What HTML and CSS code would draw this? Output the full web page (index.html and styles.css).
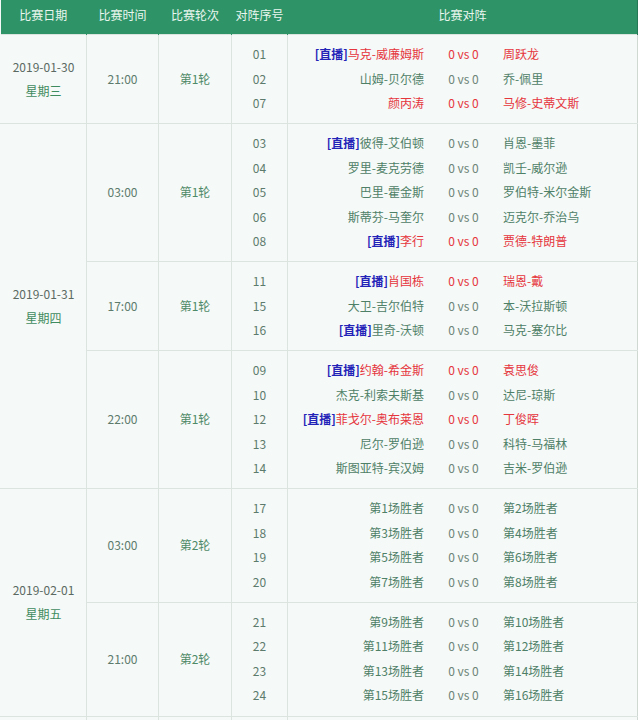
FILE: index.html
```html
<!DOCTYPE html>
<html lang="zh">
<head>
<meta charset="utf-8">
<title>赛程</title>
<link rel="stylesheet" href="styles.css">
</head>
<body>
<table class="sched">
  <colgroup>
    <col class="c-date"><col class="c-time"><col class="c-round"><col class="c-no"><col class="c-match">
  </colgroup>
  <thead>
    <tr><th>比赛日期</th><th>比赛时间</th><th>比赛轮次</th><th>对阵序号</th><th>比赛对阵</th></tr>
  </thead>
  <tbody>
    <tr>
      <td class="date"><div class="d">2019-01-30</div><div class="w">星期三</div></td>
      <td>21:00</td>
      <td class="rnd">第1轮</td>
      <td class="nos"><div>01</div><div>02</div><div>07</div></td>
      <td class="m">
        <div class="mr red"><span class="h"><b class="live">[直播]</b>马克-威廉姆斯</span><span class="s">0 vs 0</span><span class="a">周跃龙</span></div>
        <div class="mr"><span class="h">山姆-贝尔德</span><span class="s">0 vs 0</span><span class="a">乔-佩里</span></div>
        <div class="mr red"><span class="h">颜丙涛</span><span class="s">0 vs 0</span><span class="a">马修-史蒂文斯</span></div>
      </td>
    </tr>
    <tr>
      <td class="date" rowspan="3"><div class="d">2019-01-31</div><div class="w">星期四</div></td>
      <td>03:00</td>
      <td class="rnd">第1轮</td>
      <td class="nos"><div>03</div><div>04</div><div>05</div><div>06</div><div>08</div></td>
      <td class="m">
        <div class="mr"><span class="h"><b class="live">[直播]</b>彼得-艾伯顿</span><span class="s">0 vs 0</span><span class="a">肖恩-墨菲</span></div>
        <div class="mr"><span class="h">罗里-麦克劳德</span><span class="s">0 vs 0</span><span class="a">凯壬-威尔逊</span></div>
        <div class="mr"><span class="h">巴里-霍金斯</span><span class="s">0 vs 0</span><span class="a">罗伯特-米尔金斯</span></div>
        <div class="mr"><span class="h">斯蒂芬-马奎尔</span><span class="s">0 vs 0</span><span class="a">迈克尔-乔治乌</span></div>
        <div class="mr red"><span class="h"><b class="live">[直播]</b>李行</span><span class="s">0 vs 0</span><span class="a">贾德-特朗普</span></div>
      </td>
    </tr>
    <tr>
      <td>17:00</td>
      <td class="rnd">第1轮</td>
      <td class="nos"><div>11</div><div>15</div><div>16</div></td>
      <td class="m">
        <div class="mr red"><span class="h"><b class="live">[直播]</b>肖国栋</span><span class="s">0 vs 0</span><span class="a">瑞恩-戴</span></div>
        <div class="mr"><span class="h">大卫-吉尔伯特</span><span class="s">0 vs 0</span><span class="a">本-沃拉斯顿</span></div>
        <div class="mr"><span class="h"><b class="live">[直播]</b>里奇-沃顿</span><span class="s">0 vs 0</span><span class="a">马克-塞尔比</span></div>
      </td>
    </tr>
    <tr>
      <td>22:00</td>
      <td class="rnd">第1轮</td>
      <td class="nos"><div>09</div><div>10</div><div>12</div><div>13</div><div>14</div></td>
      <td class="m">
        <div class="mr red"><span class="h"><b class="live">[直播]</b>约翰-希金斯</span><span class="s">0 vs 0</span><span class="a">袁思俊</span></div>
        <div class="mr"><span class="h">杰克-利索夫斯基</span><span class="s">0 vs 0</span><span class="a">达尼-琼斯</span></div>
        <div class="mr red"><span class="h"><b class="live">[直播]</b>菲戈尔-奥布莱恩</span><span class="s">0 vs 0</span><span class="a">丁俊晖</span></div>
        <div class="mr"><span class="h">尼尔-罗伯逊</span><span class="s">0 vs 0</span><span class="a">科特-马福林</span></div>
        <div class="mr"><span class="h">斯图亚特-宾汉姆</span><span class="s">0 vs 0</span><span class="a">吉米-罗伯逊</span></div>
      </td>
    </tr>
    <tr>
      <td class="date" rowspan="2"><div class="d">2019-02-01</div><div class="w">星期五</div></td>
      <td>03:00</td>
      <td class="rnd">第2轮</td>
      <td class="nos"><div>17</div><div>18</div><div>19</div><div>20</div></td>
      <td class="m">
        <div class="mr"><span class="h">第1场胜者</span><span class="s">0 vs 0</span><span class="a">第2场胜者</span></div>
        <div class="mr"><span class="h">第3场胜者</span><span class="s">0 vs 0</span><span class="a">第4场胜者</span></div>
        <div class="mr"><span class="h">第5场胜者</span><span class="s">0 vs 0</span><span class="a">第6场胜者</span></div>
        <div class="mr"><span class="h">第7场胜者</span><span class="s">0 vs 0</span><span class="a">第8场胜者</span></div>
      </td>
    </tr>
    <tr>
      <td>21:00</td>
      <td class="rnd">第2轮</td>
      <td class="nos"><div>21</div><div>22</div><div>23</div><div>24</div></td>
      <td class="m">
        <div class="mr"><span class="h">第9场胜者</span><span class="s">0 vs 0</span><span class="a">第10场胜者</span></div>
        <div class="mr"><span class="h">第11场胜者</span><span class="s">0 vs 0</span><span class="a">第12场胜者</span></div>
        <div class="mr"><span class="h">第13场胜者</span><span class="s">0 vs 0</span><span class="a">第14场胜者</span></div>
        <div class="mr"><span class="h">第15场胜者</span><span class="s">0 vs 0</span><span class="a">第16场胜者</span></div>
      </td>
    </tr>
    <tr class="tail">
      <td></td><td></td><td></td><td></td><td></td>
    </tr>
  </tbody>
</table>
</body>
</html>
```

FILE: styles.css
```css
html, body {
  margin: 0;
  padding: 0;
  background: #ffffff;
}
body {
  font-family: "Noto Sans CJK SC", "Noto Sans", sans-serif;
  font-size: 12px;
  color: #5d7b6d;
}
.sched {
  width: 637px;
  table-layout: fixed;
  border-collapse: collapse;
  background: #f5f9f7;
}
.c-date { width: 86px; }
.c-time { width: 72px; }
.c-round { width: 73px; }
.c-no { width: 56px; }
.c-match { width: 350px; }

.sched th {
  background: #2e9468;
  color: #eaf6ef;
  font-weight: normal;
  height: 29px;
  line-height: 20px;
  padding: 0 0 5px;
  text-align: center;
  border: 0;
  border-right: 1px solid #2e9468;
}
.sched th:last-child {
  border-right: 1px solid #257a55;
}
.sched td {
  border: 1px solid #dbe4df;
  text-align: center;
  vertical-align: middle;
  padding: 7px 0 7.6px;
  line-height: 24.5px;
}
.sched td:first-child {
  border-left-color: #f5f9f7;
}
.sched td:last-child {
  border-right-color: #cfd8d3;
}
.sched .tail td {
  height: 8px;
  padding: 0;
  line-height: 8px;
}
.date .d {
  color: #5b6963;
  line-height: 24px;
}
.date .w {
  color: #3f8b60;
  line-height: 24px;
}
.rnd {
  color: #4f8a68;
}
.nos div {
  height: 24.5px;
}
.sched td.m {
  text-align: left;
}
.mr {
  display: grid;
  grid-template-columns: 136px 79px 1fr;
  height: 24.5px;
  color: #4e8067;
}
.mr .h {
  text-align: right;
  white-space: nowrap;
}
.mr .s {
  text-align: center;
  color: #6c8479;
}
.mr .a {
  text-align: left;
  white-space: nowrap;
}
.mr.red,
.mr.red .s {
  color: #e5353d;
}
.live {
  color: #2323b8;
  font-weight: bold;
}
```
